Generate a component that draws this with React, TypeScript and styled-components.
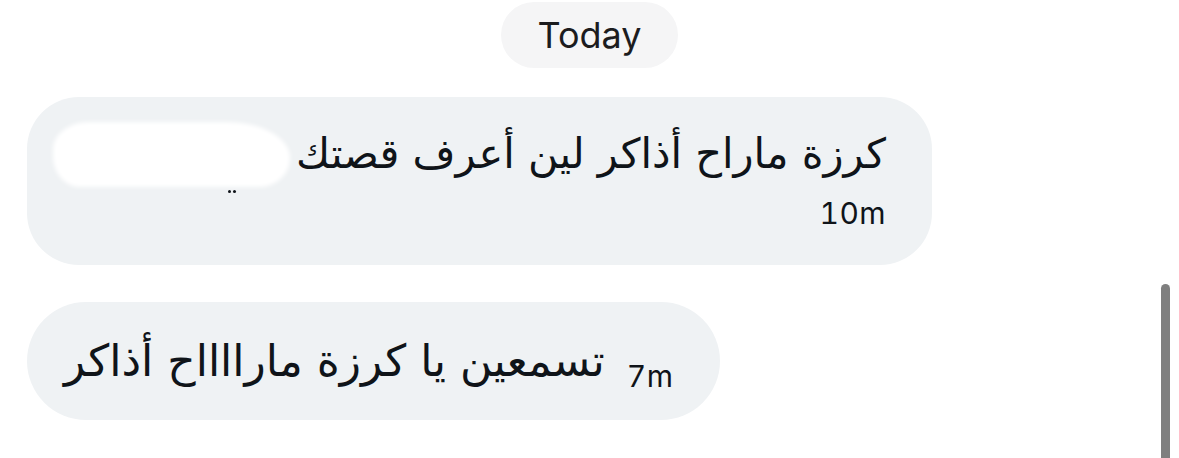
import React from "react";
import styled, { createGlobalStyle } from "styled-components";

const GlobalStyle = createGlobalStyle`
  html, body {
    margin: 0;
    padding: 0;
    background: #ffffff;
  }
  body {
    font-family: "Inter", "DejaVu Sans", sans-serif;
    color: #0f1419;
  }
`;

const Page = styled.div`
  position: relative;
  width: 1179px;
  height: 458px;
  overflow: hidden;
  background: #fff;
`;

const Thread = styled.div`
  display: flex;
  flex-direction: column;
  align-items: flex-start;
  padding: 2px 0 0 27px;
`;

const DayPill = styled.div`
  align-self: center;
  margin-left: -27px;
  height: 66px;
  padding: 0 37px;
  display: flex;
  align-items: center;
  border-radius: 33px;
  background: #f5f5f6;
  font-family: "Inter", "Liberation Sans", sans-serif;
  font-size: 36px;
  color: #1c1c1e;
`;

const Bubble = styled.div<{ $inline?: boolean; $mt: number }>`
  margin-top: ${({ $mt }) => $mt}px;
  background: #eff2f4;
  border-radius: ${({ $inline }) => ($inline ? "59px" : "52px")};
  display: flex;
  flex-direction: ${({ $inline }) => ($inline ? "row" : "column")};
  align-items: flex-end;
  padding: ${({ $inline }) =>
    $inline ? "0 46px 0 37px" : "20px 46px 0 26px"};
  height: ${({ $inline }) => ($inline ? "118px" : "168px")};
  box-sizing: border-box;
`;

const Line = styled.div`
  display: flex;
  align-items: center;
  gap: 6px;
`;

const ArabicText = styled.span<{ $size: number }>`
  direction: rtl;
  font-family: "DejaVu Sans", sans-serif;
  font-size: ${({ $size }) => $size}px;
  line-height: 74px;
  white-space: nowrap;
  color: #0f1419;
`;

const Redacted = styled.span`
  position: relative;
  display: inline-block;
  width: 237px;
  height: 65px;
  &::before {
    content: "";
    position: absolute;
    inset: 0;
    background: #ffffff;
    border-radius: 40px 70px 34px 30px / 30px 40px 32px 34px;
    filter: blur(2px);
  }
  &::after {
    content: "";
    position: absolute;
    left: 175px;
    top: 68px;
    width: 3px;
    height: 3px;
    background: #0f1419;
    border-radius: 50%;
    box-shadow: 5px 0 0 #0f1419;
  }
`;

const Time = styled.span<{ $mb: number; $mt?: number }>`
  font-family: "Inter", "Liberation Sans", sans-serif;
  font-size: 30px;
  font-variant-numeric: tabular-nums;
  letter-spacing: 0.5px;
  color: #0f1419;
  margin-top: ${({ $mt }) => $mt ?? 0}px;
  margin-bottom: ${({ $mb }) => $mb}px;
  white-space: nowrap;
`;

const InlineBody = styled.div`
  display: flex;
  align-items: center;
  gap: 22px;
  height: 100%;
`;

const Scrollbar = styled.div`
  position: absolute;
  left: 1161px;
  top: 284px;
  width: 9px;
  height: 200px;
  background: #7f7f7f;
  border-radius: 5px;
`;

export default function App() {
  return (
    <Page>
      <GlobalStyle />
      <Thread>
        <DayPill>Today</DayPill>
        <Bubble $mt={29}>
          <Line>
            <Redacted />
            <ArabicText $size={41.5}>كرزة ماراح أذاكر لين أعرف قصتك</ArabicText>
          </Line>
          <Time $mb={0} $mt={4}>10m</Time>
        </Bubble>
        <Bubble $inline $mt={37}>
          <InlineBody>
            <ArabicText $size={44}>تسمعين يا كرزة مارااااح أذاكر</ArabicText>
            <Time $mb={-30}>7m</Time>
          </InlineBody>
        </Bubble>
      </Thread>
      <Scrollbar />
    </Page>
  );
}
